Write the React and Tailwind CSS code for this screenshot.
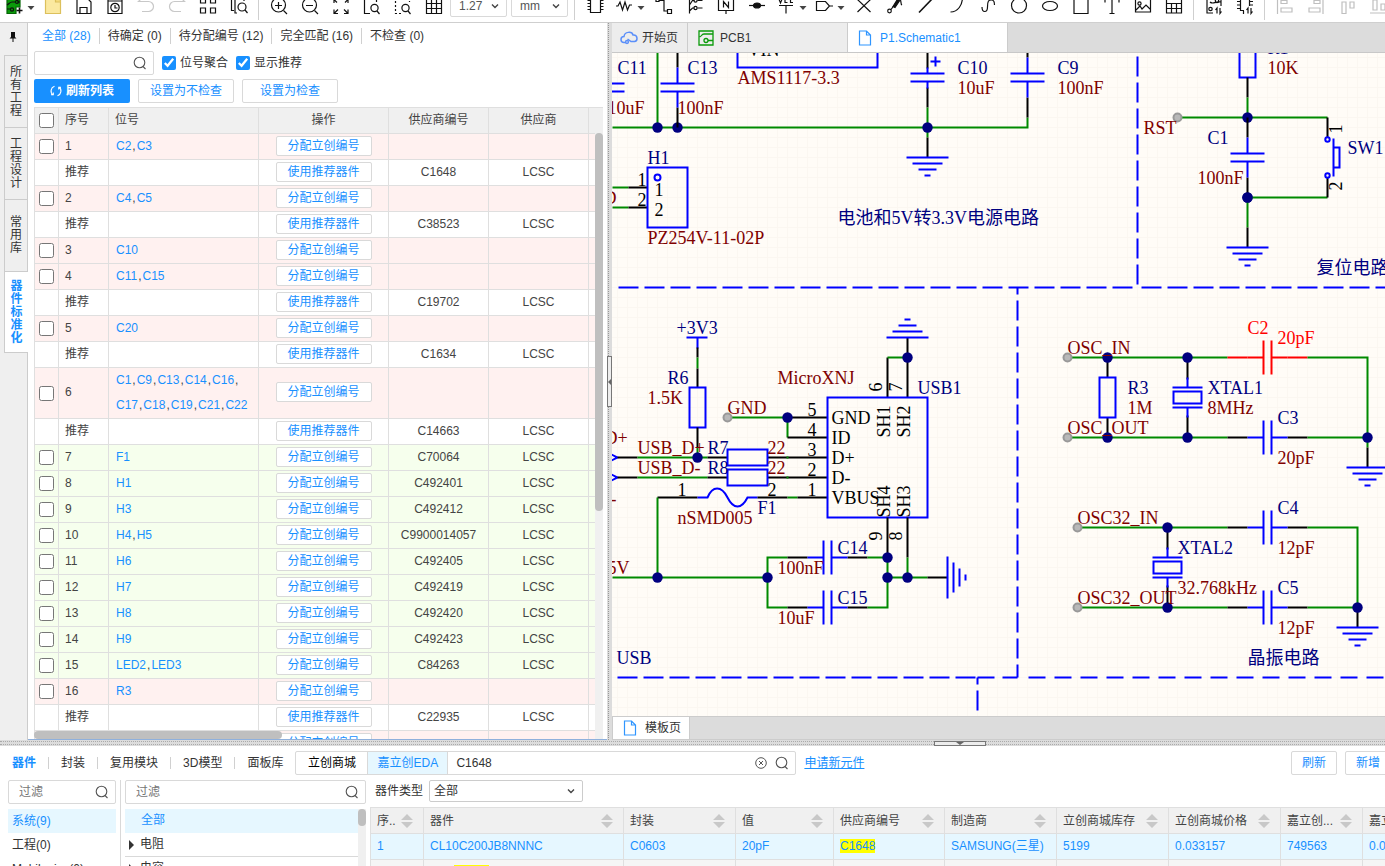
import React from 'react';

const BLUE = '#0000ff';
const GREEN = '#008a00';
const BLACK = '#000000';
const NAVY = '#000080';
const MAROON = '#800000';
const RED = '#ff0000';

/* ---------- toolbar ---------- */

function Icon({ children, color = '#111' }) {
  return (
    <svg viewBox="0 0 20 20" className="h-5 w-5 shrink-0" fill="none" stroke={color} strokeWidth="1.2" aria-hidden="true">
      {children}
    </svg>
  );
}

function Tool({ label, color, children }) {
  return (
    <button type="button" aria-label={label} className="flex h-8 w-[31px] shrink-0 items-center justify-center">
      <Icon color={color}>{children}</Icon>
    </button>
  );
}

function MenuTool({ label, first, children }) {
  return (
    <button
      type="button"
      aria-label={label}
      className={`flex h-8 shrink-0 items-center gap-[3px] pl-1 ${first ? 'w-[37px]' : 'w-[38px]'}`}
    >
      <Icon>{children}</Icon>
      <svg viewBox="0 0 8 8" className="mt-1 h-2 w-2 shrink-0" fill="#444" aria-hidden="true">
        <path d="M0.5 2h7L4 6z" />
      </svg>
    </button>
  );
}

function Chevron() {
  return (
    <svg viewBox="0 0 8 8" className="pointer-events-none absolute right-2 h-2 w-2" fill="none" stroke="#444" strokeWidth="1.4" aria-hidden="true">
      <path d="M1 2.5l3 3 3-3" />
    </svg>
  );
}

function Divider() {
  return <span className="mx-1 mb-0.5 h-7 w-px shrink-0 bg-[#cfcfcf]" />;
}

function ToolSelect({ label, value }) {
  return (
    <span className="relative mb-[5px] flex h-[22px] w-[57px] shrink-0 items-center">
      <select aria-label={label} className="h-full w-full appearance-none rounded-xs border border-[#d9d9d9] bg-white pl-2 text-xs text-[#555]">
        <option>{value}</option>
      </select>
      <Chevron />
    </span>
  );
}

function Toolbar() {
  return (
    <header className="flex h-[23px] shrink-0 items-end overflow-hidden border-b border-[#cfcfcf] bg-white">
      <MenuTool label="新建" first>
        <path d="M3 1h13v10h-4v6.500H3z" fill="#0a9a0a" stroke="#056605" />
        <path d="M3 9c2-1 3-3 5-3h4M3 13h3M16 6l-3 0" />
        <circle cx="8" cy="13.500" r="1.600" />
        <circle cx="13" cy="6" r="1.500" />
        <path d="M12.500 14.500h6M15.500 11.500v6" strokeWidth="1.600" />
      </MenuTool>
      <Tool label="打开" color="#dcc05c">
        <path d="M2.500 1h8l2 3h5v13.500h-15z" fill="#fbe9a0" />
        <path d="M12.500 1v5h5" fill="#f6dc7c" />
      </Tool>
      <Tool label="保存">
        <path d="M3 1h9l5 5v11.500H3z" />
        <path d="M6 17v-5.500h7V17" />
      </Tool>
      <Tool label="历史版本">
        <path d="M3 1h14v16.500H3zM3 5h14" />
        <circle cx="10" cy="11.500" r="4.200" />
        <path d="M10 9v3h2.500" />
      </Tool>
      <Tool label="撤销" color="#c8c8c8">
        <path d="M6 2L2.500 5.500h10a5 5 0 0 1 0 10H6" />
      </Tool>
      <Tool label="重做" color="#c8c8c8">
        <path d="M14 2l3.500 3.500h-10a5 5 0 0 0 0 10H14" />
      </Tool>
      <Tool label="布局">
        <path d="M2.500 2h5v5h-5zM12.500 2h5v5h-5zM2.500 12h5v5h-5zM12.500 12h5v5h-5z" />
      </Tool>
      <Tool label="查找">
        <path d="M5 14.500H2.500V1M8 17H6V3h9v2" />
        <circle cx="13" cy="11" r="4" />
        <path d="M16 14l2.500 3" />
      </Tool>
      <Divider />
      <Tool label="放大">
        <circle cx="9.500" cy="9" r="7" />
        <path d="M6 9.500h7M9.500 6v7M14.500 14.500l3.500 3.500" />
      </Tool>
      <Tool label="缩小">
        <circle cx="9.500" cy="9" r="7" />
        <path d="M6 9.500h7M14.500 14.500l3.500 3.500" />
      </Tool>
      <Tool label="适合窗口">
        <path d="M3 7V3.500h4M13 3.500h4V7M17 13.500v4h-4M7 17.500H3v-4M3 3.500l3 3M17 3.500l-3 3M17 17.500l-4-4M3 17.500l4-4" />
      </Tool>
      <Tool label="适合选中">
        <path d="M8 17.500H2.500V1h12v5" />
        <circle cx="12.500" cy="12" r="3.600" />
        <path d="M15 15l2.500 3" />
      </Tool>
      <Tool label="区域缩放">
        <path d="M8 17.500H2.500V1h14v5" strokeDasharray="2 2" />
        <circle cx="12.500" cy="12" r="3.600" />
        <path d="M15 15l2.500 3" />
      </Tool>
      <Tool label="网格">
        <path d="M2.500 1h15v16.500h-15zM2.500 7.500h15M2.500 12.500h15M7.500 1v16M12.500 1v16" />
      </Tool>
      <span className="ml-px flex shrink-0 gap-1 pr-0.5">
        <ToolSelect label="网格尺寸" value="1.27" />
        <ToolSelect label="单位" value="mm" />
      </span>
      <Divider />
      <Tool label="器件">
        <path d="M5.500 1h10v15.500h-10zM2.500 4.500h3M2.500 7.500h3M2.500 10.500h3M2.500 13.500h3M15.500 4.500h3M15.500 7.500h3M15.500 10.500h3M15.500 13.500h3" />
      </Tool>
      <MenuTool label="电阻">
        <path d="M2 10h2l2-4 2.500 8L11 6l2.500 8L15.500 9H18" />
      </MenuTool>
      <Tool label="导线">
        <path d="M5 4.500h5V15h3.500" />
        <path d="M13.500 13.500h4v4h-4zM2 2.500h3v3H2z" />
      </Tool>
      <Tool label="总线">
        <path d="M4.500 1v16.500M4.500 9l3-4.500h2M4.500 15l3-3h2M12.500 4.500h5M12.500 12h5" />
        <circle cx="10.500" cy="4.500" r="1.600" />
        <circle cx="10.500" cy="12" r="1.600" />
      </Tool>
      <Tool label="网络标签">
        <path d="M2.500 1h15v13.500h-15zM10 14.500v3.500M7.500 11.500V5.500l5 6V5.500" />
      </Tool>
      <Tool label="节点">
        <path d="M2 9.500h16" />
        <ellipse cx="10" cy="9.500" rx="3.500" ry="2.500" fill="#111" />
      </Tool>
      <MenuTool label="网络端口 VCC">
        <path d="M3 9.500h14M10 9.500v8M2.500 2l2 5 2-5M11.500 2.500H9v4h2.500M17 2.500h-2.500v4H17" />
      </MenuTool>
      <MenuTool label="端口">
        <path d="M2.500 5.500h9l4 4.500-4 4.500h-9zM15.500 10H19" />
      </MenuTool>
      <Tool label="非连接标识">
        <path d="M3.500 3.500l13 12.500M16.500 3.500L3.500 16" />
      </Tool>
      <Tool label="探针">
        <circle cx="4.500" cy="15" r="1.800" />
        <path d="M6 13.500l3-4" />
        <path d="M8 10.500l5-8 2 1.500-5 7.500z" fill="#111" />
        <path d="M14 3c3 0 1 5 3 6" />
      </Tool>
      <Tool label="折线">
        <path d="M3 16.500L17 2" strokeWidth="1.600" />
      </Tool>
      <Tool label="圆弧">
        <path d="M3.500 16C11 16 15.500 9 15.500 1" />
      </Tool>
      <Tool label="曲线">
        <path d="M4 11c0 6 5.500 6 5.500 0s1-7 4-7 3 3 3 5" />
      </Tool>
      <Tool label="圆形">
        <circle cx="10" cy="9.500" r="7.500" />
      </Tool>
      <Tool label="椭圆">
        <ellipse cx="10" cy="10" rx="7.500" ry="4.500" />
      </Tool>
      <Tool label="矩形">
        <path d="M3 2.500h14v15H3z" />
      </Tool>
      <Tool label="文本">
        <path d="M3 6.500V3.500h14v3M10 3.500v14M7.500 17.500h5" />
      </Tool>
      <Tool label="图片">
        <path d="M2.500 3.500h15V16h-15zM3 14l4-4 2 3 4-4 4 4" />
        <circle cx="6.500" cy="7.500" r="1.600" />
      </Tool>
      <Tool label="表格">
        <path d="M2.500 2.500h15v14.500h-15zM2.500 7.500h15M2.500 12.500h15M7.500 7.500V17M12.500 7.500V17" />
      </Tool>
      <Divider />
      <Tool label="更新到PCB">
        <path d="M9 17H3V1h14v9M6 6c3 3 5-1 11 0M13 17.500V12l-1.500 2M16 12v5.500l1.500-2" />
        <circle cx="6.500" cy="13" r="1.700" />
        <circle cx="13" cy="5" r="1.700" />
      </Tool>
      <Tool label="更新器件">
        <path d="M9 14.500H5.500V3.500h9V10M2 5.500h3M2 9h3M2 12.500h3M15 5.500h3M15 9h3M8.500 15v3M13 17.500V12l-1.500 2M16 12v5.500l1.500-2" />
      </Tool>
      <Divider />
      <Tool label="左对齐" color="#bfbfbf">
        <path d="M2.500 1v17M6 4.500h6v3H6zM6 12h11v4H6z" />
      </Tool>
      <Tool label="右对齐" color="#bfbfbf">
        <path d="M17 1v17M8 4.500h6v3H8zM3 12h11v4H3z" />
      </Tool>
      <Tool label="顶部对齐" color="#bfbfbf">
        <path d="M2 3h16M5 6h4v11.500H5zM13 6h4v6h-4z" />
      </Tool>
      <Tool label="底部对齐" color="#bfbfbf">
        <path d="M2 17h16M5 4h4v10H5zM13 8h4v6h-4z" />
      </Tool>
    </header>
  );
}

/* ---------- shared bits ---------- */

function SearchIcon() {
  return (
    <svg viewBox="0 0 14 14" className="h-3.5 w-3.5 shrink-0" fill="none" stroke="#555" strokeWidth="1.1" aria-hidden="true">
      <circle cx="6.500" cy="6.500" r="5.300" />
      <path d="M10 10.500l2.500 2.500" />
    </svg>
  );
}

function FileIcon() {
  return (
    <svg viewBox="0 0 14 16" className="h-4 w-3.5 shrink-0" fill="none" stroke="#2f95ff" strokeWidth="1.200" aria-hidden="true">
      <path d="M1.500 1h7l4 4v10h-11zM8.500 1v4h4" />
    </svg>
  );
}

/* ---------- left side ---------- */

const SIDE_TABS = ['所有工程', '工程设计', '常用库'];

function SideTabs() {
  return (
    <nav className="flex w-7 shrink-0 flex-col bg-[#efefef]">
      <button type="button" aria-label="固定" className="flex h-8 items-center justify-center border-r border-[#ccc] pr-0.5">
        <svg viewBox="0 0 8 12" className="mb-1 h-3 w-2" aria-hidden="true">
          <path d="M2 1h4v5l1.500 1.500h-7L2 6z" fill="#111" />
          <path d="M4 7v4" stroke="#111" strokeWidth="1" />
        </svg>
      </button>
      <div className="flex flex-1 flex-col border-r border-[#ccc]">
        {SIDE_TABS.map((t) => (
          <button
            key={t}
            type="button"
            className="ml-1 flex h-[72px] items-center justify-center border-t border-l border-[#ccc] text-xs leading-[13px] text-[#333]"
          >
            <span className="w-3 break-all">{t}</span>
          </button>
        ))}
        <button
          type="button"
          className="-mr-px ml-1 flex h-[82px] items-center justify-center border-y border-l border-[#ccc] bg-white text-xs leading-[13px] font-bold text-[#1890ff]"
        >
          <span className="w-3 break-all">器件标准化</span>
        </button>
      </div>
    </nav>
  );
}

const ASSIGN = '分配立创编号';
const USE = '使用推荐器件';

const PARTS = [
  ['1', 'C2,C3', '', 'p'],
  ['推荐', '', 'C1648', ''],
  ['2', 'C4,C5', '', 'p'],
  ['推荐', '', 'C38523', ''],
  ['3', 'C10', '', 'p'],
  ['4', 'C11,C15', '', 'p'],
  ['推荐', '', 'C19702', ''],
  ['5', 'C20', '', 'p'],
  ['推荐', '', 'C1634', ''],
  ['6', 'C1,C9,C13,C14,C16,C17,C18,C19,C21,C22', '', 'p'],
  ['推荐', '', 'C14663', ''],
  ['7', 'F1', 'C70064', 'g'],
  ['8', 'H1', 'C492401', 'g'],
  ['9', 'H3', 'C492412', 'g'],
  ['10', 'H4,H5', 'C9900014057', 'g'],
  ['11', 'H6', 'C492405', 'g'],
  ['12', 'H7', 'C492419', 'g'],
  ['13', 'H8', 'C492420', 'g'],
  ['14', 'H9', 'C492423', 'g'],
  ['15', 'LED2,LED3', 'C84263', 'g'],
  ['16', 'R3', '', 'p'],
  ['推荐', '', 'C22935', ''],
  ['17', 'R6', '', 'p'],
];

const ROW_BG = { p: 'bg-[#fff1f0]', g: 'bg-[#f6ffed]', '': 'bg-white' };
const CELL = 'border-r border-b border-[#dfdfdf]';
const CHECK = 'mx-auto block h-[15px] w-[15px]';

function PartsTable() {
  return (
    <div className="relative mt-1 min-h-0 flex-1 overflow-hidden">
      <table className="w-full table-fixed border-separate border-spacing-0 text-xs text-[#444]">
        <colgroup>
          <col className="w-[25px]" />
          <col className="w-[50px]" />
          <col className="w-[150px]" />
          <col className="w-[130px]" />
          <col className="w-[100px]" />
          <col className="w-[100px]" />
          <col />
        </colgroup>
        <thead>
          <tr className="h-[27px] bg-[#f0f0f0]">
            <th className={`border-t border-l ${CELL}`}>
              <input type="checkbox" aria-label="全选" className={CHECK} />
            </th>
            <th className={`border-t px-1.5 pb-0.5 text-left font-normal ${CELL}`}>序号</th>
            <th className={`border-t px-1.5 pb-0.5 text-left font-normal ${CELL}`}>位号</th>
            <th className={`border-t pb-0.5 font-normal ${CELL}`}>操作</th>
            <th className={`border-t pb-0.5 font-normal ${CELL}`}>供应商编号</th>
            <th className={`border-t pb-0.5 font-normal ${CELL}`}>供应商</th>
            <th className="border-t border-b border-[#dfdfdf]" />
          </tr>
        </thead>
        <tbody>
          {PARTS.map(([no, refs, code, tone], i) => {
            const rec = no === '推荐';
            const list = refs ? refs.split(',') : [];
            return (
              <tr key={i} className={`h-[26px] ${ROW_BG[tone]}`}>
                <td className={`border-l ${CELL}`}>
                  {!rec && <input type="checkbox" aria-label={`选择 ${no}`} className={CHECK} />}
                </td>
                <td className={`px-1.5 pb-0.5 ${CELL}`}>{no}</td>
                <td className={`px-1.5 leading-[25px] ${CELL}`}>
                  <div className="flex flex-wrap">
                    {list.map((r, k) => (
                      <span key={r}>
                        <a href={`#${r}`} className="px-px text-[#1890ff]">{r}</a>
                        {k < list.length - 1 && ','}
                      </span>
                    ))}
                  </div>
                </td>
                <td className={CELL}>
                  <button type="button" className="mx-auto mb-0.5 flex h-5 w-24 items-center justify-center rounded-xs border border-[#d9d9d9] bg-white text-[#1890ff]">
                    {rec ? USE : ASSIGN}
                  </button>
                </td>
                <td className={`pb-0.5 text-center ${CELL}`}>{code}</td>
                <td className={`pb-0.5 text-center ${CELL}`}>{code && 'LCSC'}</td>
                <td className="border-b border-[#dfdfdf]" />
              </tr>
            );
          })}
        </tbody>
      </table>
      <div className="absolute top-[26px] right-0 bottom-0 w-2 bg-[#f0f0f0]">
        <div className="h-[378px] rounded-full bg-[#bfbfbf]" />
      </div>
      <div className="absolute bottom-0 left-0 h-2 w-[248px] rounded-full bg-[#bfbfbf]" />
    </div>
  );
}

const FILTERS = ['全部 (28)', '待确定 (0)', '待分配编号 (12)', '完全匹配 (16)', '不检查 (0)'];

function PartsPanel() {
  return (
    <section className="flex w-[579px] shrink-0 flex-col border-b border-[#8fb0dc] bg-white pr-1 pl-1.5 text-xs text-[#333]">
      <div className="flex h-[26px] shrink-0 items-center">
        {FILTERS.map((f, i) => (
          <button
            key={f}
            type="button"
            className={`h-4 px-2 leading-4 ${i < FILTERS.length - 1 ? 'border-r border-[#d0d0d0]' : ''} ${i === 0 ? 'text-[#1890ff]' : ''}`}
          >
            {f}
          </button>
        ))}
      </div>
      <div className="mt-0.5 flex h-6 shrink-0 items-center">
        <div className="flex h-6 w-[120px] items-center rounded-xs border border-[#d9d9d9] pr-1.5 pl-2">
          <input aria-label="搜索" className="min-w-0 flex-1 outline-none" />
          <SearchIcon />
        </div>
        <label className="ml-2 flex items-center gap-1">
          <input type="checkbox" defaultChecked className="h-3.5 w-3.5 accent-[#1890ff]" />
          位号聚合
        </label>
        <label className="ml-2 flex items-center gap-1">
          <input type="checkbox" defaultChecked className="h-3.5 w-3.5 accent-[#1890ff]" />
          显示推荐
        </label>
      </div>
      <div className="mt-1 flex shrink-0 gap-2">
        <button type="button" className="flex h-6 w-24 items-center justify-center gap-1 rounded-xs bg-[#1890ff] font-bold text-white">
          <svg viewBox="0 0 12 12" className="h-3 w-3" fill="none" stroke="#fff" strokeWidth="1.100" aria-hidden="true">
            <path d="M4.500 1.300A5 5 0 0 0 3 10M7.500 10.700A5 5 0 0 0 9 2M1 9.800h2.300V7.500M11 2.200H8.700v2.300" />
          </svg>
          刷新列表
        </button>
        <button type="button" className="h-6 w-24 rounded-xs border border-[#d9d9d9] text-[#1890ff]">设置为不检查</button>
        <button type="button" className="h-6 w-24 rounded-xs border border-[#d9d9d9] text-[#1890ff]">设置为检查</button>
      </div>
      <PartsTable />
    </section>
  );
}

/* ---------- schematic ---------- */

function W({ p, c = GREEN }) {
  return <polyline points={p} stroke={c} />;
}

function T({ x, y, c = NAVY, r, children }) {
  return (
    <text x={x} y={y} fill={c} stroke="none" transform={r ? `rotate(-90 ${x} ${y})` : undefined} dy="-1">
      {children}
    </text>
  );
}

function Dot({ x, y }) {
  return <circle cx={x} cy={y} r="5.200" fill={NAVY} stroke="none" />;
}

function Port({ x, y }) {
  return <circle cx={x} cy={y} r="4" fill="#b8b8b8" stroke="#999" strokeWidth="2" />;
}

function Ground({ x, y, r = 0 }) {
  return (
    <path
      d="M-21 0h42M-15 6h30M-9 12h18M-3 18h6"
      stroke={BLUE}
      transform={`translate(${x} ${y}) rotate(${r})`}
    />
  );
}

/* Capacitor with leads running from -40 to +40 along its axis. */
function Cap({ x, y, vertical, selected }) {
  const lead = selected ? RED : BLACK;
  const body = selected ? RED : BLUE;
  return (
    <g transform={`translate(${x} ${y})${vertical ? ' rotate(90)' : ''}`}>
      <path d="M-40 0h20M20 0h20" stroke={lead} />
      <path d="M-20 0h16M4 0h16M-4 -17v34M4 -17v34" stroke={body} />
    </g>
  );
}

function Crystal({ x, y }) {
  return (
    <g transform={`translate(${x} ${y})`}>
      <path d="M0 -40v22M0 18v22" stroke={BLACK} />
      <path d="M0 -20v10M0 10v10M-15 -10h30M-15 10h30M-14 -6h28v12h-28z" stroke={BLUE} />
    </g>
  );
}

function Box({ x, y, w, h }) {
  return <rect x={x} y={y} width={w} height={h} stroke={BLUE} />;
}

function Schematic() {
  return (
    <svg
      className="block h-full w-full [font-family:'Liberation_Serif','Noto_Sans_CJK_SC',serif]"
      fill="none"
      strokeWidth="2"
      fontSize="18"
      role="img"
      aria-label="P1.Schematic1"
    >
      <defs>
        <pattern id="grid" width="10" height="10" patternUnits="userSpaceOnUse" x="5" y="4">
          <path d="M0 0.500h10M0.500 0v10" stroke="#fbf7f1" strokeWidth="1" />
        </pattern>
      </defs>
      <rect width="100%" height="100%" fill="url(#grid)" />
      <g transform="translate(-611.5 -52.5)">
        {/* frame dividers */}
        <g stroke={BLUE} strokeDasharray="20 6">
          <path d="M618 287H1137M1141 287H1600M1137 56V287M617 677H977" />
          <path d="M1017 287V677M977 677V900" strokeDashoffset="13" />
          <path d="M977 677H994M1002 677H1017" strokeDasharray="none" />
          <path d="M1028 677H1600" strokeDasharray="17 9" />
        </g>

        {/* power supply */}
        <path d="M590 83h34M590 91h34" stroke={BLUE} />
        <W p="612,127 1027,127 1027,117" />
        <W p="657,40 657,127" />
        <Dot x={657} y={127} /><Dot x={677} y={127} />
        <Cap x={677} y={87} vertical />
        <Box x={737} y={20} w={140} h={47} />
        <path d="M927 47v21M927 87v20" stroke={BLACK} />
        <path d="M927 67v6M910 73h34M910 81h34M927 81v7M930 61h10M935 56v10" stroke={BLUE} />
        <W p="927,107 927,137" />
        <Dot x={927} y={127} />
        <W p="927,137 927,157" c={BLACK} />
        <Ground x={927} y={157} />
        <Cap x={1027} y={77} vertical />
        <T x={617} y={74}>C11</T><T x={607} y={114} c={MAROON}>10uF</T>
        <T x={687} y={74}>C13</T><T x={677} y={114} c={MAROON}>100nF</T>
        <T x={747} y={56} c={BLACK}>VIN</T>
        <T x={737} y={84} c={MAROON}>AMS1117-3.3</T>
        <T x={957} y={74}>C10</T><T x={957} y={94} c={MAROON}>10uF</T>
        <T x={1057} y={74}>C9</T><T x={1057} y={94} c={MAROON}>100nF</T>
        <T x={837} y={224}>电池和5V转3.3V电源电路</T>

        {/* battery header */}
        <W p="612,187 628,187" /><W p="612,207 628,207" />
        <W p="628,187 647,187" c={BLACK} /><W p="628,207 647,207" c={BLACK} />
        <Box x={647} y={167} w={40} h={60} />
        <circle cx="657" cy="177" r="3" stroke={BLUE} />
        <T x={647} y={164}>H1</T>
        <T x={637} y={186} c={BLACK}>1</T><T x={637} y={206} c={BLACK}>2</T>
        <T x={654} y={196} c={BLACK}>1</T><T x={654} y={216} c={BLACK}>2</T>
        <T x={577} y={204} c={MAROON}>GND</T>
        <T x={647} y={244} c={MAROON}>PZ254V-11-02P</T>

        {/* reset */}
        <Box x={1239} y={37} w={16} h={40} />
        <W p="1247,77 1247,97" c={BLACK} />
        <W p="1247,97 1247,117" /><W p="1177,117 1327,117" />
        <Port x={1177} y={117} />
        <Dot x={1247} y={117} /><Dot x={1247} y={197} />
        <Cap x={1247} y={157} vertical />
        <W p="1247,197 1327,197" /><W p="1247,197 1247,227" />
        <W p="1247,227 1247,247" c={BLACK} />
        <Dot x={1247} y={197} />
        <Ground x={1247} y={247} />
        <W p="1327,117 1327,137" c={BLACK} /><W p="1327,177 1327,197" c={BLACK} />
        <circle cx="1327" cy="139" r="2.200" stroke={BLUE} />
        <circle cx="1327" cy="175" r="2.200" stroke={BLUE} />
        <path d="M1333 138v38M1333 147h6v20h-6" stroke={BLUE} />
        <T x={1342} y={133} c={BLACK} r>1</T><T x={1342} y={190} c={BLACK} r>2</T>
        <T x={1267} y={54}>R1</T><T x={1267} y={74} c={MAROON}>10K</T>
        <T x={1143} y={134} c={MAROON}>RST</T>
        <T x={1207} y={144}>C1</T><T x={1197} y={184} c={MAROON}>100nF</T>
        <T x={1347} y={154}>SW1</T>
        <T x={1316} y={274}>复位电路</T>

        {/* usb pull-up and data lines */}
        <path d="M686 337h21M697 337v11" stroke={BLUE} />
        <W p="697,347 697,357" c={BLACK} /><W p="697,357 697,368" />
        <W p="697,368 697,387" c={BLACK} />
        <Box x={689} y={387} w={16} h={40} />
        <W p="697,427 697,447" c={BLACK} /><W p="697,447 697,457" />
        <path d="M605 451l12 6-12 6M605 471l12 6-12 6" stroke={BLUE} />
        <W p="617,457 637,457" c={BLACK} /><W p="617,477 637,477" c={BLACK} />
        <W p="637,457 707,457" /><W p="637,477 707,477" />
        <W p="707,457 827,457" c={BLACK} /><W p="707,477 827,477" c={BLACK} />
        <W p="786,457 788,457" /><W p="786,477 788,477" />
        <rect x="727" y="449" width="40" height="16" fill="#fffcf7" stroke={BLUE} />
        <rect x="727" y="469" width="40" height="16" fill="#fffcf7" stroke={BLUE} />
        <Dot x={697} y={457} />
        <T x={676} y={334}>+3V3</T>
        <T x={667} y={384}>R6</T><T x={647} y={404} c={MAROON}>1.5K</T>
        <T x={604} y={444} c={MAROON}>D+</T><T x={597} y={505} c={MAROON}>D-</T>
        <T x={637} y={454} c={MAROON}>USB_D+</T><T x={637} y={474} c={MAROON}>USB_D-</T>
        <T x={707} y={454}>R7</T><T x={707} y={474}>R8</T>
        <T x={767} y={454} c={MAROON}>22</T><T x={767} y={474} c={MAROON}>22</T>

        {/* fuse */}
        <W p="697,497 657,497" c={BLACK} /><W p="657,497 657,577" />
        <path d="M697 497h10c5 -12 14 -12 20 0s14 12 20 0h10" stroke={BLUE} />
        <W p="757,497 787,497" c={BLACK} /><W p="787,497 797,497" />
        <W p="797,497 827,497" c={BLACK} />
        <T x={677} y={496} c={BLACK}>1</T><T x={767} y={496} c={BLACK}>2</T>
        <T x={757} y={514}>F1</T><T x={677} y={524} c={MAROON}>nSMD005</T>

        {/* usb connector */}
        <W p="727,417 787,417 787,437" />
        <W p="787,417 827,417" c={BLACK} /><W p="787,437 827,437" c={BLACK} />
        <Port x={727} y={417} /><Dot x={787} y={417} />
        <W p="907,337 907,397" c={BLACK} /><W p="887,357 887,397" c={BLACK} />
        <W p="887,357 907,357" /><Dot x={907} y={357} />
        <Ground x={907} y={337} r={180} />
        <Box x={827} y={397} w={100} h={120} />
        <T x={727} y={414} c={MAROON}>GND</T>
        <T x={777} y={384} c={MAROON}>MicroXNJ</T><T x={917} y={394}>USB1</T>
        <T x={807} y={416} c={BLACK}>5</T><T x={807} y={436} c={BLACK}>4</T>
        <T x={807} y={456} c={BLACK}>3</T><T x={807} y={476} c={BLACK}>2</T>
        <T x={807} y={496} c={BLACK}>1</T>
        <T x={831} y={424} c={BLACK}>GND</T><T x={831} y={444} c={BLACK}>ID</T>
        <T x={831} y={464} c={BLACK}>D+</T><T x={831} y={484} c={BLACK}>D-</T>
        <T x={831} y={504} c={BLACK}>VBUS</T>
        <T x={882} y={391} c={BLACK} r>6</T><T x={902} y={391} c={BLACK} r>7</T>
        <T x={890} y={437} c={BLACK} r>SH1</T><T x={910} y={437} c={BLACK} r>SH2</T>
        <T x={890} y={517} c={BLACK} r>SH4</T><T x={910} y={517} c={BLACK} r>SH3</T>
        <T x={882} y={540} c={BLACK} r>9</T><T x={902} y={540} c={BLACK} r>8</T>

        {/* usb decoupling */}
        <W p="612,577 767,577" />
        <W p="787,557 767,557 767,607 787,607" />
        <Cap x={827} y={557} /><Cap x={827} y={607} />
        <W p="867,557 887,557" /><W p="867,607 887,607 887,557" />
        <W p="887,517 887,557" c={BLACK} /><W p="907,517 907,557" c={BLACK} />
        <W p="907,557 907,577" /><W p="887,577 927,577" />
        <W p="927,577 947,577" c={BLACK} />
        <Ground x={947} y={577} r={-90} />
        <Dot x={657} y={577} /><Dot x={767} y={577} /><Dot x={887} y={557} />
        <Dot x={887} y={577} /><Dot x={907} y={577} />
        <T x={607} y={574} c={MAROON}>5V</T>
        <T x={837} y={554}>C14</T><T x={777} y={574} c={MAROON}>100nF</T>
        <T x={837} y={604}>C15</T><T x={777} y={624} c={MAROON}>10uF</T>
        <T x={616} y={664}>USB</T>

        {/* 8 MHz oscillator */}
        <W p="1067,357 1227,357" /><W p="1067,437 1227,437" />
        <Cap x={1267} y={357} selected /><Cap x={1267} y={437} />
        <W p="1307,357 1367,357 1367,447" /><W p="1307,437 1367,437" />
        <W p="1367,447 1367,467" c={BLACK} />
        <Ground x={1367} y={467} />
        <W p="1107,357 1107,377" c={BLACK} /><W p="1107,417 1107,437" c={BLACK} />
        <Box x={1099} y={377} w={16} h={40} />
        <Crystal x={1187} y={397} />
        <Port x={1067} y={357} /><Port x={1067} y={437} />
        <Dot x={1107} y={357} /><Dot x={1187} y={357} />
        <Dot x={1107} y={437} /><Dot x={1187} y={437} /><Dot x={1367} y={437} />
        <T x={1067} y={354} c={MAROON}>OSC_IN</T><T x={1067} y={434} c={MAROON}>OSC_OUT</T>
        <T x={1127} y={394}>R3</T><T x={1127} y={414} c={MAROON}>1M</T>
        <T x={1207} y={394}>XTAL1</T><T x={1207} y={414} c={MAROON}>8MHz</T>
        <T x={1247} y={334} c={RED}>C2</T><T x={1277} y={344} c={RED}>20pF</T>
        <T x={1277} y={424}>C3</T><T x={1277} y={464} c={MAROON}>20pF</T>

        {/* 32 kHz oscillator */}
        <W p="1077,527 1227,527" /><W p="1077,607 1227,607" />
        <Cap x={1267} y={527} /><Cap x={1267} y={607} />
        <W p="1307,527 1357,527 1357,607 1307,607" />
        <W p="1357,607 1357,627" c={BLACK} />
        <Ground x={1357} y={627} />
        <Crystal x={1167} y={567} />
        <Port x={1077} y={527} /><Port x={1077} y={607} />
        <Dot x={1167} y={527} /><Dot x={1167} y={607} /><Dot x={1357} y={607} />
        <T x={1077} y={524} c={MAROON}>OSC32_IN</T><T x={1077} y={604} c={MAROON}>OSC32_OUT</T>
        <T x={1177} y={554}>XTAL2</T><T x={1177} y={594} c={MAROON}>32.768kHz</T>
        <T x={1277} y={514}>C4</T><T x={1277} y={554} c={MAROON}>12pF</T>
        <T x={1277} y={594}>C5</T><T x={1277} y={634} c={MAROON}>12pF</T>
        <T x={1247} y={664}>晶振电路</T>
      </g>
    </svg>
  );
}

function Editor() {
  return (
    <section className="flex min-w-0 flex-1 flex-col bg-[#dcdcdc] text-xs text-[#333]">
      <div className="flex h-[30px] shrink-0 border-b border-[#c8c8c8]">
        <button type="button" className="flex w-[76px] items-center gap-1 border-r border-[#ccc] bg-[#ededed] pl-2">
          <svg viewBox="0 0 18 14" className="h-3.5 w-[18px] shrink-0" fill="none" stroke="#5b8ff9" strokeWidth="1.500" aria-hidden="true">
            <path d="M6 11.500H4a3 3 0 0 1 0-6c.5-5 8-5.500 9-1.500 5-.5 5 6 1.500 6.500H11L7.500 8" />
            <circle cx="7" cy="11" r="1.400" />
          </svg>
          开始页
        </button>
        <button type="button" className="flex w-40 items-center gap-1.5 border-r border-[#ccc] bg-[#ededed] pl-2.5">
          <svg viewBox="0 0 16 16" className="h-4 w-4 shrink-0" fill="none" stroke="#0a9a0a" strokeWidth="1.300" aria-hidden="true">
            <path d="M1 1h14v14H1zM1 7c3 0 2-3 5-3h9M10 10.500h5" />
            <circle cx="8" cy="10.500" r="2" />
          </svg>
          PCB1
        </button>
        <button type="button" className="flex w-40 items-center gap-2 border-r border-[#ccc] bg-white pl-2.5 text-[#1890ff]">
          <FileIcon />
          P1.Schematic1
        </button>
      </div>
      <div className="min-h-0 flex-1 overflow-hidden bg-[#fffcf7]">
        <Schematic />
      </div>
      <div className="flex h-6 shrink-0 border-y border-[#ccc]">
        <button type="button" className="flex w-[78px] items-center gap-2 border-x border-[#ccc] bg-white pl-2.5">
          <FileIcon />
          模板页
        </button>
      </div>
    </section>
  );
}

/* ---------- library panel ---------- */

const LIB_TABS = ['器件', '封装', '复用模块', '3D模型', '面板库'];
const COLS = ['序..', '器件', '封装', '值', '供应商编号', '制造商', '立创商城库存', '立创商城价格', '嘉立创...', '嘉立创价格'];
const ROW = ['1', 'CL10C200JB8NNNC', 'C0603', '20pF', 'C1648', 'SAMSUNG(三星)', '5199', '0.033157', '749563', '0.033157'];

function FilterBox({ label }) {
  return (
    <div className="flex h-6 shrink-0 items-center rounded-xs border border-[#d9d9d9] pr-1.5 pl-2.5">
      <input aria-label={label} placeholder="过滤" className="min-w-0 flex-1 outline-none placeholder:text-[#757575]" />
      <SearchIcon />
    </div>
  );
}

function LibraryTable() {
  return (
    <div className="overflow-hidden">
      <table className="w-[1105px] table-fixed border-separate border-spacing-0 text-xs">
        <colgroup>
          <col className="w-[54px]" />
          <col className="w-[200px]" />
          <col className="w-[112px]" />
          <col className="w-[98px]" />
          <col className="w-[111px]" />
          <col className="w-[112px]" />
          <col className="w-[112px]" />
          <col className="w-[112px]" />
          <col className="w-[82px]" />
          <col className="w-[112px]" />
        </colgroup>
        <thead>
          <tr className="h-[27px] bg-[#f0f0f0] text-[#444]">
            {COLS.map((c) => (
              <th key={c} className="border-t border-r border-b border-[#dfdfdf] pr-2.5 pl-1.5 font-normal first:border-l">
                <span className="flex items-center justify-between">
                  <span className="whitespace-nowrap">{c}</span>
                  <svg viewBox="0 0 12 14" className="h-3.5 w-3 shrink-0" fill="#c8c8c8" aria-hidden="true">
                    <path d="M6 0l6 6H0zM0 8h12l-6 6z" />
                  </svg>
                </span>
              </th>
            ))}
          </tr>
        </thead>
        <tbody>
          <tr className="h-[26px] bg-[#e6f7ff] text-[#1890ff]">
            {ROW.map((v, i) => (
              <td key={i} className="border-r border-b border-[#dfdfdf] px-1.5 pb-0.5 first:border-l">
                {i === 4 ? <mark className="bg-[#ffff00] text-inherit">{v}</mark> : v}
              </td>
            ))}
          </tr>
          <tr className="h-[26px] bg-[#f5f5f5] text-[#444]">
            {ROW.map((v, i) => (
              <td key={i} className="border-r border-b border-[#dfdfdf] px-1.5 pb-0.5 first:border-l">
                {i === 1 ? <>CC0<mark className="bg-[#ffff00] text-inherit">C1648</mark></> : ''}
              </td>
            ))}
          </tr>
        </tbody>
      </table>
    </div>
  );
}

function LibraryPanel() {
  return (
    <section className="flex h-[120px] shrink-0 flex-col overflow-hidden bg-white text-xs text-[#333]">
      <div className="mt-[5px] flex h-6 shrink-0 items-center pl-3">
        {LIB_TABS.map((t, i) => (
          <React.Fragment key={t}>
            <button type="button" className={`shrink-0 ${i === 0 ? 'font-bold text-[#1890ff]' : ''}`}>{t}</button>
            {i < LIB_TABS.length - 1 && <span className="mx-3 h-3 w-px shrink-0 bg-[#d0d0d0]" />}
          </React.Fragment>
        ))}
        <div className="ml-3 flex h-6 w-[501px] shrink-0 rounded-xs border border-[#d9d9d9]">
          <button type="button" className="w-[72px] border-r border-[#d9d9d9] text-black">立创商城</button>
          <button type="button" className="w-20 border-r border-[#d9d9d9] bg-[#e6f7ff] text-[#1890ff]">嘉立创EDA</button>
          <div className="flex min-w-0 flex-1 items-center gap-2 pr-1.5 pl-2">
            <input aria-label="搜索器件" defaultValue="C1648" className="min-w-0 flex-1 outline-none" />
            <button type="button" aria-label="清除">
              <svg viewBox="0 0 12 12" className="h-3 w-3" fill="none" stroke="#555" strokeWidth="1" aria-hidden="true">
                <circle cx="6" cy="6" r="5.300" />
                <path d="M4 4l4 4M8 4l-4 4" />
              </svg>
            </button>
            <SearchIcon />
          </div>
        </div>
        <a href="#request" className="ml-2 shrink-0 text-[#1890ff] underline">申请新元件</a>
        <div className="ml-auto flex shrink-0 gap-2">
          <button type="button" className="h-6 w-[46px] rounded-xs border border-[#d9d9d9] text-[#1890ff]">刷新</button>
          <button type="button" className="-mr-1.5 h-6 w-[46px] rounded-xs border border-[#d9d9d9] text-[#1890ff]">新增</button>
        </div>
      </div>
      <div className="mt-[5px] flex min-h-0 flex-1">
        <div className="flex w-[121px] shrink-0 flex-col border-r border-[#d9d9d9] pr-1 pl-2">
          <FilterBox label="过滤分类" />
          <ul className="mt-[5px] leading-6">
            <li className="bg-[#e6f7ff] pl-1 text-[#1890ff]">系统(9)</li>
            <li className="pl-1">工程(0)</li>
            <li className="pl-1">Mobilenius(0)</li>
          </ul>
        </div>
        <div className="ml-1 w-[241px] shrink-0">
          <FilterBox label="过滤类型" />
          <div className="mt-[5px] flex">
            <ul className="flex-1 leading-[23px]">
              <li className="border-b border-transparent bg-[#e6f7ff] pl-4 text-[#1890ff]">全部</li>
              {['电阻', '电容'].map((t) => (
                <li key={t} className="flex items-center gap-1.5 border-b border-[#d9d9d9] pl-1">
                  <svg viewBox="0 0 5 10" className="h-2.5 w-[5px]" fill="#333" aria-hidden="true">
                    <path d="M0 0l5 5-5 5z" />
                  </svg>
                  {t}
                </li>
              ))}
            </ul>
            <div className="w-2 bg-[#f0f0f0]">
              <div className="h-[17px] rounded-full bg-[#bfbfbf]" />
            </div>
          </div>
        </div>
        <div className="ml-1 min-w-0 flex-1">
          <label className="mb-[5px] flex h-[22px] items-center gap-1.5 pl-[5px]">
            器件类型
            <span className="relative flex h-[22px] w-[154px] items-center">
              <select className="h-full w-full appearance-none rounded-xs border border-[#ccc] bg-white pl-1">
                <option>全部</option>
              </select>
              <Chevron />
            </span>
          </label>
          <LibraryTable />
        </div>
      </div>
    </section>
  );
}

/* ---------- page ---------- */

export default function App() {
  return (
    <div className="flex h-screen flex-col overflow-hidden bg-white [font-family:'Liberation_Sans','Noto_Sans_CJK_SC',sans-serif]">
      <Toolbar />
      <main className="flex min-h-0 flex-1">
        <SideTabs />
        <PartsPanel />
        <div className="flex w-[5px] shrink-0 flex-col bg-[#dcdcdc]">
          <div className="ml-px w-px flex-1 border-l border-dotted border-[#999]" />
          <button type="button" aria-label="折叠左侧面板" className="flex h-[51px] items-center justify-end border border-[#777] bg-[#ededed]">
            <svg viewBox="0 0 3 6" className="h-1.5 w-[3px]" fill="#666" aria-hidden="true"><path d="M3 0v6L0 3z" /></svg>
          </button>
          <div className="ml-px w-px flex-1 border-l border-dotted border-[#999]" />
        </div>
        <Editor />
      </main>
      <div className="flex h-1.5 shrink-0 items-center bg-[#dcdcdc]">
        <div className="h-1 grow-[934] basis-0 border-y border-dotted border-[#aaa]" />
        <button type="button" aria-label="折叠底部面板" className="flex h-[5px] w-[52px] items-start justify-center border border-[#777] bg-[#ededed]">
          <svg viewBox="0 0 8 3" className="h-[3px] w-2" fill="#666" aria-hidden="true"><path d="M0 0h8L4 3z" /></svg>
        </button>
        <div className="h-1 grow-[399] basis-0 border-y border-dotted border-[#aaa]" />
      </div>
      <LibraryPanel />
    </div>
  );
}
